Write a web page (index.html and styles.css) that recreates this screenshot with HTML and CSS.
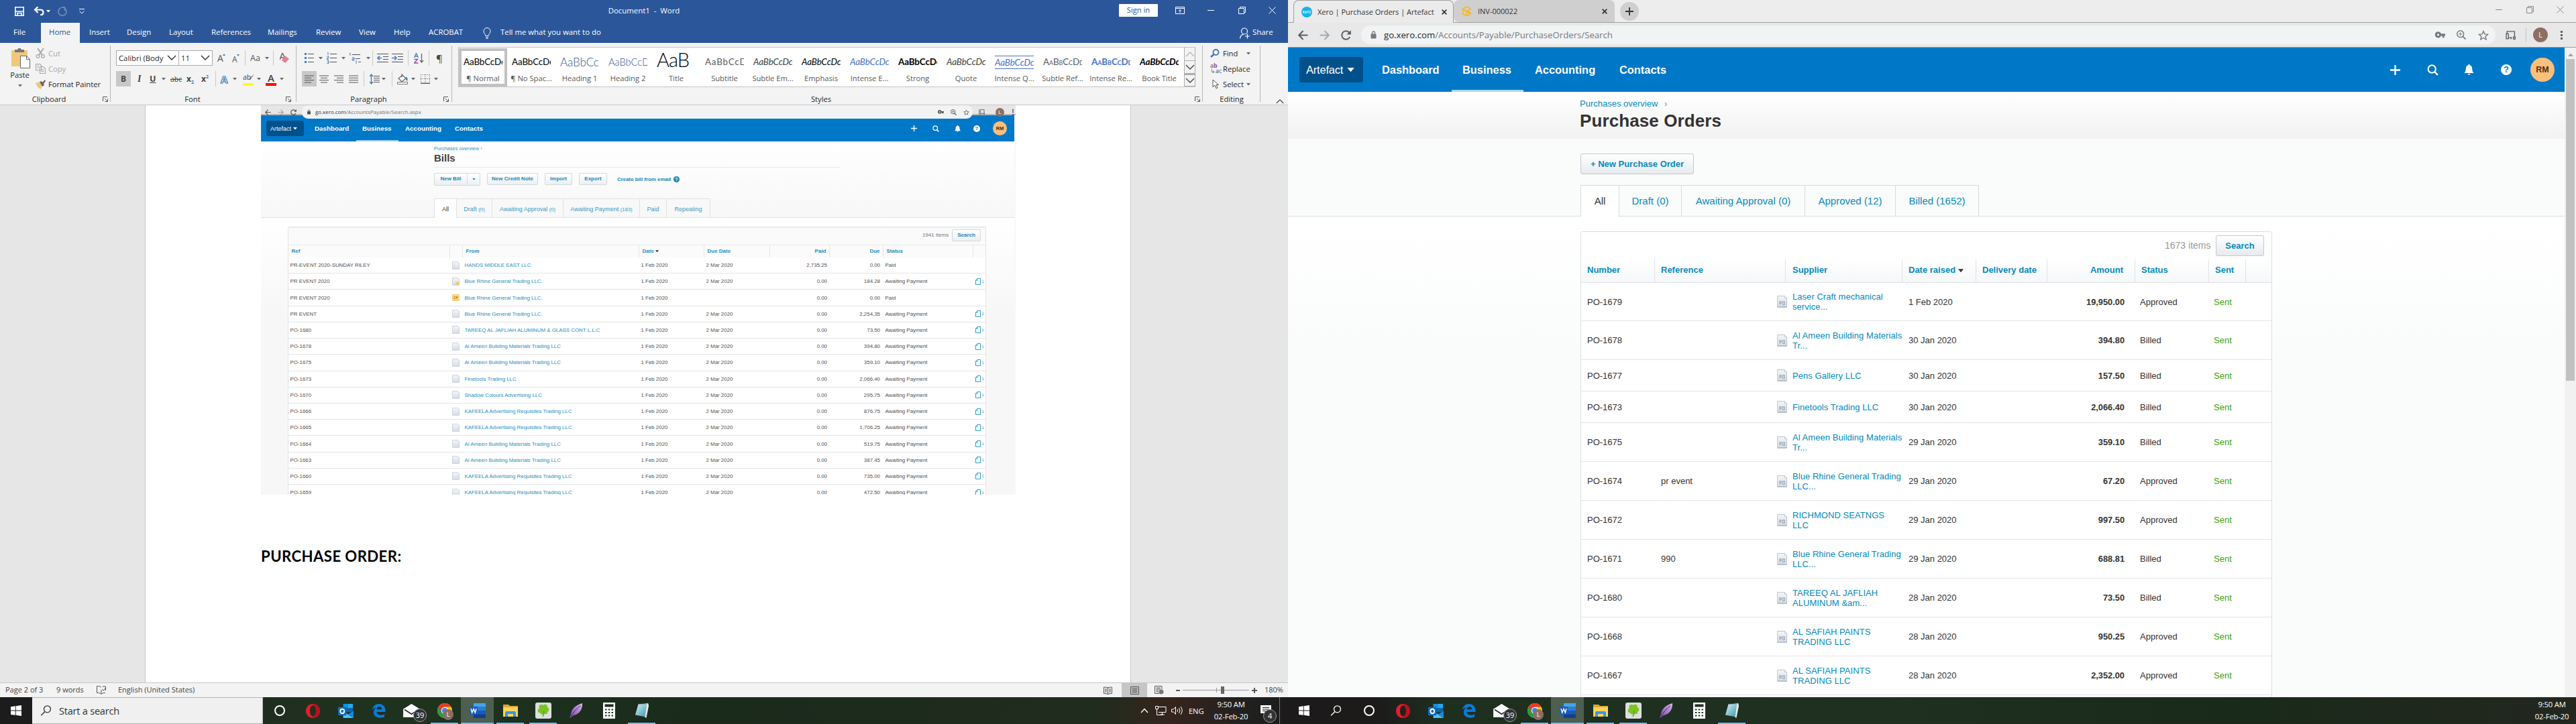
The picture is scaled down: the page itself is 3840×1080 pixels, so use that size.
FILE: index.html
```html
<!DOCTYPE html>
<html lang="en">
<head>
<meta charset="utf-8">
<title>Desktop</title>
<link rel="stylesheet" href="styles.css">
</head>
<body>
<svg class="defs" aria-hidden="true">
  <defs>
    <linearGradient id="gdoc" x1="0" y1="0" x2="0" y2="1"><stop offset="0" stop-color="#f4f6f8"/><stop offset="1" stop-color="#d5dce3"/></linearGradient>
    <linearGradient id="gfeather" x1="1" y1="0" x2="0" y2="1"><stop offset="0" stop-color="#d9b8ea"/><stop offset="1" stop-color="#6f3fa0"/></linearGradient>
    <linearGradient id="gnote" x1="0" y1="0" x2="1" y2="1"><stop offset="0" stop-color="#d5f1f7"/><stop offset="1" stop-color="#3c98ad"/></linearGradient>
  </defs>
  <symbol id="arr" viewBox="0 0 6 4"><path d="M0 0h6L3 3.6z" fill="currentColor"/></symbol>
  <symbol id="chev" viewBox="0 0 14 9"><path d="M1 1l6 6 6-6" fill="none" stroke="currentColor" stroke-width="1.3"/></symbol>
  <symbol id="launch" viewBox="0 0 8 8"><path d="M.5 7V.5H7M3 3l4 4M7.5 3.5v4h-4" fill="none" stroke="#555"/></symbol>
  <symbol id="lines" viewBox="0 0 14 12"><path d="M0 1h14M0 4.300h10M0 7.600h14M0 11h10" stroke="#555" fill="none"/></symbol>
  <symbol id="plus" viewBox="0 0 14 14"><path d="M7 0v14M0 7h14" stroke="currentColor" stroke-width="2.200"/></symbol>
  <symbol id="search" viewBox="0 0 16 16"><circle cx="6.800" cy="6.500" r="5.300" fill="none" stroke="currentColor" stroke-width="2"/><path d="M10.700 10.600L15 15" stroke="currentColor" stroke-width="2.300"/></symbol>
  <symbol id="bell" viewBox="0 0 14 16"><path d="M7 0c.9 0 1.300.6 1.300 1.300C10.800 2 11.600 4 11.700 6.500c.1 3.500.8 4.600 2.300 6.500H0c1.500-1.900 2.200-3 2.300-6.500C2.400 4 3.200 2 5.700 1.300 5.700.6 6.100 0 7 0zM5.200 14h3.600c-.2 1.200-.9 1.800-1.800 1.800S5.400 15.200 5.200 14z" fill="currentColor"/></symbol>
  <symbol id="lock" viewBox="0 0 8 12"><rect y="4.500" width="8" height="7" rx="1" fill="currentColor"/><path d="M2 5V3a2 2 0 014 0v2" fill="none" stroke="currentColor" stroke-width="1.300"/></symbol>
  <symbol id="back" viewBox="0 0 14 14"><path d="M13.500 7H1.500M7 1L1.200 7 7 13" fill="none" stroke="currentColor" stroke-width="1.900"/></symbol>
  <symbol id="reload" viewBox="0 0 14 14"><path d="M12.300 9.500A5.800 5.800 0 117 1.200c2 0 3.500.9 4.700 2.400" fill="none" stroke="currentColor" stroke-width="1.900"/><path d="M13.800 0v6H8z" fill="currentColor"/></symbol>
  <symbol id="key" viewBox="0 0 14 9"><path d="M4.200 0a4.300 4.300 0 014 2.900H14v3h-1.300v2.600h-2.700V5.900H8.200A4.300 4.300 0 114.200 0zm0 2.900a1.500 1.500 0 100 3 1.500 1.500 0 000-3z" fill="currentColor"/></symbol>
  <symbol id="zoomin" viewBox="0 0 14 14"><circle cx="5.700" cy="5.700" r="4.900" fill="none" stroke="currentColor" stroke-width="1.500"/><path d="M9.300 9.300l4.200 4.200" stroke="currentColor" stroke-width="1.800"/><path d="M5.700 3.300v4.800M3.300 5.700h4.800" stroke="currentColor"/></symbol>
  <symbol id="star" viewBox="0 0 16 15"><path d="M8 1.500l1.900 4.400 4.800.4L11 9.400l1.200 4.600L8 11.500 3.800 14 5 9.400 1.300 6.300l4.800-.4z" fill="none" stroke="currentColor" stroke-width="1.400"/></symbol>
  <symbol id="cast" viewBox="0 0 14 12"><path d="M2 4V.7h10.500V8M5 9.500h4M1 4h3v7H1zM11 8.500h2.500v2.800H11zM7.500 9.500v2" fill="none" stroke="currentColor" stroke-width="1.300"/></symbol>
  <symbol id="restore" viewBox="0 0 11 11"><path d="M.5 2.500h8v8h-8zM2.500 2.500v-2h8v8h-2" fill="none" stroke="currentColor"/></symbol>
  <symbol id="close" viewBox="0 0 11 11"><path d="M.5.500l10 10M10.500.500l-10 10" stroke="currentColor" fill="none"/></symbol>
  <symbol id="tabx" viewBox="0 0 8 8"><path d="M.7.700l6.600 6.600M7.300.700L.7 7.300" stroke="currentColor" stroke-width="1.700" fill="none"/></symbol>
  <symbol id="bill" viewBox="0 0 11 12"><path d="M.5.500h7.500l2.500 2v9H.5z" fill="url(#gdoc)" stroke="#c5ccd3" stroke-width=".8"/></symbol>
  <symbol id="billn" viewBox="0 0 11 12"><path d="M.5.500h7.500l2.500 2v9H.5z" fill="url(#gdoc)" stroke="#c5ccd3" stroke-width=".8"/><rect x="5" y="6.500" width="5.500" height="4" rx="1" fill="#f7ca5c"/></symbol>
  <symbol id="billc" viewBox="0 0 11 10"><rect x=".4" y=".4" width="10.200" height="9" rx="1" fill="#fadd7c" stroke="#eebb47" stroke-width=".8"/><path d="M5 3.500H3v3h2M6 6.500v-3h2v1.500H6l2 1.500" fill="none" stroke="#a9791a" stroke-width=".8"/></symbol>
  <symbol id="clip" viewBox="0 0 8 10"><path d="M3 .5h4.500v9h-7V3zM.5 3.200H3V.5" fill="none" stroke="#2b9fc9"/></symbol>
  <symbol id="po" viewBox="0 0 15 18"><path d="M.6.500h10.900l3 3v13.800H.6z" fill="url(#gdoc)" stroke="#bdc6d0"/><path d="M11.500.500v3h3" fill="#fff" stroke="#bdc6d0"/><path d="M4 13.500V9h2.200v2.500H4M8.500 9h2.800v4.400H8.500z" fill="none" stroke="#a3afbd" stroke-width="1.300"/><path d="M1 16.900h13.500" stroke="#a9b4c0" stroke-width="1.200"/></symbol>
  <symbol id="win" viewBox="0 0 16 16"><path d="M0 2.200L6.800 1.300v6.300H0zM7.700 1.200L16 0v7.600H7.700zM0 8.500h6.800v6.300L0 13.900zM7.700 8.500H16V16l-8.300-1.200z" fill="#fff"/></symbol>
  <symbol id="glass" viewBox="0 0 16 16"><circle cx="10" cy="5.800" r="5" fill="none" stroke="currentColor" stroke-width="1.300"/><path d="M6.500 9.500L.7 15.300" stroke="currentColor" stroke-width="1.400"/></symbol>
  <symbol id="opera" viewBox="0 0 24 24"><path fill-rule="evenodd" d="M12 1c6.300 0 11 4.800 11 11s-4.700 11-11 11S1 18.200 1 12 5.700 1 12 1zm0 2.700c-2.900 0-4.700 3.700-4.700 8.300s1.800 8.300 4.700 8.300 4.700-3.700 4.700-8.300S14.900 3.700 12 3.700z" fill="#e81c27"/><path d="M16.700 12c0 4.600-1.800 8.300-4.700 8.300V23c6.300 0 11-4.800 11-11S18.300 1 12 1v2.700c2.900 0 4.700 3.700 4.700 8.300z" fill="#bd0f1c"/></symbol>
  <symbol id="outlook" viewBox="0 0 24 24"><rect x="8" y="1" width="15" height="13" fill="#0a64ad"/><path d="M8 1h7.500v6.500H8z" fill="#1490df"/><path d="M15.500 1H23v6.500h-7.500z" fill="#28a8ea"/><path d="M8 13l8 4 8-5v11H8z" fill="#1a87d7"/><path d="M8 13l15 10H8z" fill="#50c4f2"/><rect y="6" width="13" height="13" rx="1" fill="#0f6cbd"/><ellipse cx="6.500" cy="12.500" rx="3" ry="3.400" fill="none" stroke="#fff" stroke-width="1.900"/></symbol>
  <symbol id="edge" viewBox="0 0 22 22"><path d="M1 9.700C2 4 6 .5 11.300.5 17.700.5 21.500 5 21.500 11v2.200H7.700c.2 3.300 3 4.900 6.300 4.900 2.200 0 4.200-.6 6-1.700v4.300c-1.900 1-4.400 1.600-7.100 1.600C7 22.300 3 18.700 3 13.700c0-3.200 1.600-5.800 4.300-7.300C4.600 6.600 2.500 7.700 1 9.700zm6.900-.6h7.900c0-2.600-1.400-4.100-3.800-4.100C9.800 5 8.300 6.600 7.900 9.100z" fill="#0b7ad9"/></symbol>
  <symbol id="mail" viewBox="0 0 26 22"><path d="M0 8L13 0l13 8v13H0z" fill="#fff"/><path d="M2 9l11 7 11-7" fill="none" stroke="#1f2e20" stroke-width="1.800"/></symbol>
  <symbol id="chrome" viewBox="0 0 22 22"><circle cx="11" cy="11" r="11" fill="#fbc116"/><path d="M11 11L1.500 5.500A11 11 0 0011 22l3-6z" fill="#279a48"/><path d="M11 5.500h9.500a11 11 0 00-19 0L6 13z" fill="#e33b2e"/><circle cx="11" cy="11" r="5.200" fill="#fff"/><circle cx="11" cy="11" r="4.100" fill="#4285f4"/></symbol>
  <symbol id="word" viewBox="0 0 24 22"><path d="M6 0h18v5.500H6z" fill="#41a5ee"/><path d="M6 5.500h18V11H6z" fill="#2b7cd3"/><path d="M6 11h18v5.500H6z" fill="#185abd"/><path d="M6 16.500h18V22H6z" fill="#103f91"/><rect y="5" width="12" height="12" rx="1" fill="#185abd"/><path d="M2 8l1.700 6L6 8.500 8.300 14 10 8" fill="none" stroke="#fff" stroke-width="1.500"/></symbol>
  <symbol id="folder" viewBox="0 0 22 20"><path d="M0 1h8l2 2h12v5H0z" fill="#e0a82e"/><path d="M0 5h22v14H0z" fill="#fcd462"/><path d="M3 19v-6q0-2 2-2h12q2 0 2 2v6h-4v-4H7v4z" fill="#3a96dd"/></symbol>
  <symbol id="clover" viewBox="0 0 24 24"><rect width="24" height="24" rx="3" fill="#dcdfdf"/><g fill="#7cc41f"><circle cx="9" cy="6.500" r="3.500"/><circle cx="14.500" cy="6" r="3.300"/><circle cx="7" cy="12" r="3.300"/><circle cx="17" cy="10.500" r="3.300"/><circle cx="10" cy="15" r="2.700"/><circle cx="15.500" cy="14.500" r="2.700"/><circle cx="12" cy="10.500" r="3"/></g><path d="M12.500 12q1 5-1.500 9" stroke="#5ca016" stroke-width="1.500" fill="none"/></symbol>
  <symbol id="feather" viewBox="0 0 20 24"><path d="M20 0c.5 9-4 17-14 19L1 23.500 0 22l2-4C3 9 9 3 20 0z" fill="url(#gfeather)"/><path d="M1 23C5 15 10 9 17 4" stroke="#4b2375" fill="none"/></symbol>
  <symbol id="calc" viewBox="0 0 18 24"><path fill-rule="evenodd" d="M0 0h18v24H0zM2.500 2.500v4h13v-4zM3 9.500v2h2.500v-2zm4.700 0v2h2.600v-2zm4.800 0v2H15v-2zM3 14v2h2.500v-2zm4.700 0v2h2.600v-2zm4.800 0v2H15v-2zM3 18.500v2h2.500v-2zm4.700 0v2h2.600v-2zm4.800 0v2H15v-2z" fill="#fff"/></symbol>
  <symbol id="note" viewBox="0 0 22 24"><path d="M5 2L21 0l1 4-4 20-2-1z" fill="#e6eceb"/><path d="M5 1.500l14-.5-3 21L0 19z" fill="url(#gnote)"/><path d="M5 1.500l14-.5" stroke="#667" stroke-dasharray="1 1"/></symbol>
</svg>

<main class="screens">
<section class="screen">
  <div class="word">
    <header class="titlebar">
      <div class="quick">
        <svg width="14" height="14" viewBox="0 0 14 14"><path d="M.8.800h12.400v12.400H.8zM.8 7h12.400M4 13V9.500h6V13" fill="none" stroke="#fff" stroke-width="1.600"/></svg>
        <svg width="15" height="13" viewBox="0 0 15 13"><path d="M5.500 0L1 4.500 5.500 9M1.500 4.500H9q4.500 0 4.500 4T9 12.300" fill="none" stroke="#fff" stroke-width="2.200"/></svg>
        <svg class="a" width="6" height="4"><use href="#arr"/></svg>
        <svg class="dim" width="14" height="14" viewBox="0 0 14 14"><path d="M5 1.500A6 6 0 1010 2M10.500 6V1h-5" fill="none" stroke="#fff" stroke-width="1.800"/></svg>
        <svg width="8" height="8" viewBox="0 0 8 8"><path d="M0 .5h8" stroke="#fff"/><path d="M.5 3.500L4 7l3.500-3.500" fill="none" stroke="#fff"/></svg>
      </div>
      <div class="doctitle">Document1&nbsp; -&nbsp; Word</div>
      <div class="wincontrols">
        <span class="signin">Sign in</span>
        <svg width="14" height="11" viewBox="0 0 14 11"><path d="M.5.500h13v10H.5zM.5 2.500h13M7 9V4.500M5 6.500l2-2 2 2" fill="none" stroke="#fff"/></svg>
        <svg width="10" height="11" viewBox="0 0 10 11"><path d="M0 5.500h10" stroke="#fff"/></svg>
        <svg width="11" height="11"><use href="#restore"/></svg>
        <svg width="11" height="11"><use href="#close"/></svg>
      </div>
    </header>
    <nav class="rtabs">
      <span>File</span><span class="on">Home</span><span>Insert</span><span>Design</span><span>Layout</span><span>References</span><span>Mailings</span><span>Review</span><span>View</span><span>Help</span><span>ACROBAT</span>
      <svg width="12" height="17" viewBox="0 0 12 17"><path d="M4 12.500c0-2.500-3-3.500-3-7a5 5 0 0110 0c0 3.500-3 4.500-3 7zM4 14.500h4M4.500 16.500h3" fill="none" stroke="#fff"/></svg>
      <span>Tell me what you want to do</span>
      <svg width="15" height="17" viewBox="0 0 15 17"><circle cx="7" cy="5.500" r="4.500" fill="none" stroke="#fff" stroke-width="1.200"/><path d="M.6 16.500c0-3.500 2-5.500 5-6.300M11.500 9.500v7M8 13h7" fill="none" stroke="#fff" stroke-width="1.200"/></svg>
      <span>Share</span>
    </nav>
    <div class="ribbon">
      <div class="grp g-clip">
        <div class="clipbody">
          <div class="paste">
            <svg width="29" height="30" viewBox="0 0 29 30"><path d="M0 3h24v24H0z" fill="#f0c77c"/><path d="M5 6V2h4.500a2.500 2.500 0 015 0H19v4z" fill="#777"/><path d="M13.500 11.500h9l5 5v13h-14z" fill="#fff" stroke="#666"/><path d="M22.500 11.500v5h5" fill="none" stroke="#666"/></svg>
            <span>Paste</span>
            <svg class="a" width="6" height="4"><use href="#arr"/></svg>
          </div>
          <div class="cmds">
            <svg width="15" height="15" viewBox="0 0 15 15"><path d="M3 0l7 10M12 0L5 10" stroke="#a8a8a8" stroke-width="2"/><circle cx="3.500" cy="12" r="2.300" fill="none" stroke="#a8a8a8" stroke-width="1.300"/><circle cx="11" cy="12" r="2.300" fill="none" stroke="#a8a8a8" stroke-width="1.300"/></svg><span class="off">Cut</span>
            <svg width="15" height="15" viewBox="0 0 15 15"><path d="M.6.600h6l2 2V10H.6zM6.500 4.500h5l3 3v7h-8z" fill="#f3f3f3" stroke="#a8a8a8" stroke-width="1.100"/><path d="M8.500 9h4M8.500 11.500h4M2.500 3.500H5M2.500 6H5" stroke="#a8a8a8"/></svg><span class="off">Copy</span>
            <svg width="15" height="14" viewBox="0 0 15 14"><path d="M0 5l6-2 4 6-2 5q-5-1-8-9z" fill="#f0c77c"/><path d="M6 3l3-1 1 2 4-4 1 2-3 4 1 2-3 2z" fill="#666"/></svg><span>Format Painter</span>
          </div>
        </div>
        <footer><span>Clipboard</span><svg width="8" height="8"><use href="#launch"/></svg></footer>
      </div>
      <div class="grp g-font">
        <div class="row f1">
          <span class="combo">Calibri (Body<svg width="14" height="9"><use href="#chev"/></svg></span>
          <span class="combo">11<svg width="14" height="9"><use href="#chev"/></svg></span>
          <span class="big">A<i class="up"></i></span>
          <span class="mid">A<i class="dn"></i></span>
          <b class="sep"></b><span class="aa">Aa</span><svg class="a" width="6" height="4"><use href="#arr"/></svg><b class="sep"></b>
          <svg width="15" height="16" viewBox="0 0 15 16"><path d="M0 10L4 0l4 8M1.500 7H7" fill="none" stroke="#666" stroke-width="1.500"/><path d="M8 4l6 5-6 6-5-4z" fill="#e8808c"/></svg>
        </div>
        <div class="row f2">
          <span class="boxed"><b>B</b></span><i class="it">I</i><u class="un">U</u><svg class="a" width="6" height="4"><use href="#arr"/></svg>
          <s class="abc">abc</s><span class="sx">x<sub>2</sub></span><span class="sx">x<sup>2</sup></span><b class="sep"></b>
          <span class="glow">A</span><svg class="a" width="6" height="4"><use href="#arr"/></svg>
          <span class="hl">ab<svg width="9" height="10" viewBox="0 0 9 10"><path d="M9 0L3 9H0z" fill="#666"/></svg></span><svg class="a" width="6" height="4"><use href="#arr"/></svg>
          <span class="fc">A</span><svg class="a" width="6" height="4"><use href="#arr"/></svg>
        </div>
        <footer><span>Font</span><svg width="8" height="8"><use href="#launch"/></svg></footer>
      </div>
      <div class="grp g-para">
        <div class="row p1">
          <svg width="14" height="15" viewBox="0 0 14 15"><path d="M5 1.500h9M5 7.500h9M5 13.500h9" stroke="#555"/><path d="M0 0h3v3H0zM0 6h3v3H0zM0 12h3v3H0z" fill="#4a7ebb"/></svg><svg class="a" width="6" height="4"><use href="#arr"/></svg>
          <svg width="15" height="17" viewBox="0 0 15 17"><path d="M5 2.500h10M5 8.500h10M5 14.500h10" stroke="#555"/><path d="M1 1l1-1v4.500M.5 6.500H3v2H.5v2H3M.5 12.500H3v4H.5M1 14.500h2" fill="none" stroke="#4a7ebb"/></svg><svg class="a" width="6" height="4"><use href="#arr"/></svg>
          <svg width="17" height="16" viewBox="0 0 17 16"><path d="M4 2.500h12M9 8.500h7M13 13.500h4" stroke="#555"/><path d="M0 1l1-1v4M4 7h3v4H4V9h3M10 11v5" fill="none" stroke="#4a7ebb"/></svg><svg class="a" width="6" height="4"><use href="#arr"/></svg>
          <b class="sep"></b>
          <svg width="17" height="14" viewBox="0 0 17 14"><path d="M0 .5h17M9 4.500h8M9 8.500h8M0 12.500h17" stroke="#555"/><path d="M7 6.500H1M4 3.500l-3 3 3 3" fill="none" stroke="#4a7ebb" stroke-width="1.600"/></svg>
          <svg width="17" height="14" viewBox="0 0 17 14"><path d="M0 .5h17M9 4.500h8M9 8.500h8M0 12.500h17" stroke="#555"/><path d="M0 6.500h6M4 3.500l3 3-3 3" fill="none" stroke="#4a7ebb" stroke-width="1.600"/></svg>
          <b class="sep"></b>
          <svg width="15" height="16" viewBox="0 0 15 16"><path d="M.5 7L3.500.500l3 6.500M1.500 5h4" fill="none" stroke="#4a7ebb" stroke-width="1.300"/><path d="M.5 9.500h5l-5 5.500h6" fill="none" stroke="#8a4fb0" stroke-width="1.300"/><path d="M11.500 1v12M9 11l2.500 3 2.500-3" fill="none" stroke="#666" stroke-width="1.300"/></svg>
          <b class="sep"></b><span class="pil">¶</span>
        </div>
        <div class="row p2">
          <span class="boxed"><svg width="14" height="12"><use href="#lines"/></svg></span>
          <svg width="14" height="12" viewBox="0 0 14 12"><path d="M0 1h14M2 4.300h10M0 7.600h14M2 11h10" stroke="#555"/></svg>
          <svg width="14" height="12" viewBox="0 0 14 12"><path d="M0 1h14M4 4.300h10M0 7.600h14M4 11h10" stroke="#555"/></svg>
          <svg width="14" height="12" viewBox="0 0 14 12"><path d="M0 1h14M0 4.300h14M0 7.600h14M0 11h14" stroke="#555"/></svg>
          <b class="sep"></b>
          <svg width="15" height="16" viewBox="0 0 15 16"><path d="M6 3.500h9M6 6.500h9M6 9.500h9M6 12.500h9" stroke="#555"/><path d="M2.500 1v14M0 4l2.500-3L5 4M0 12l2.500 3L5 12" fill="none" stroke="#4a7ebb" stroke-width="1.400"/></svg><svg class="a" width="6" height="4"><use href="#arr"/></svg>
          <b class="sep"></b>
          <svg width="17" height="16" viewBox="0 0 17 16"><path d="M2 7l6-5 5 5-6 5zM7 0v5" fill="none" stroke="#666" stroke-width="1.200"/><path d="M13 4q4 3 2 7l-2-2z" fill="#4a7ebb"/><path d="M.5 12.500h15v3H.5z" fill="#fff" stroke="#777"/></svg><svg class="a" width="6" height="4"><use href="#arr"/></svg>
          <svg width="14" height="14" viewBox="0 0 14 14"><path d="M.5 0v13M13.500 0v13M7 0v13M0 .5h14M0 6.500h14" stroke="#666" stroke-dasharray="1 1.500"/><path d="M0 13.300h14" stroke="#555" stroke-width="1.400"/></svg><svg class="a" width="6" height="4"><use href="#arr"/></svg>
        </div>
        <footer><span>Paragraph</span><svg width="8" height="8"><use href="#launch"/></svg></footer>
      </div>
      <div class="grp g-styles">
        <div class="gallery">
          <div class="st sel"><em>AaBbCcDc</em><small>¶ Normal</small></div>
          <div class="st"><em>AaBbCcDc</em><small>¶ No Spac...</small></div>
          <div class="st h1"><em>AaBbCc</em><small>Heading 1</small></div>
          <div class="st h2"><em>AaBbCcD</em><small>Heading 2</small></div>
          <div class="st ti"><em>AaB</em><small>Title</small></div>
          <div class="st su"><em>AaBbCcD</em><small>Subtitle</small></div>
          <div class="st se"><em>AaBbCcDc</em><small>Subtle Em...</small></div>
          <div class="st emph"><em>AaBbCcDc</em><small>Emphasis</small></div>
          <div class="st ie"><em>AaBbCcDc</em><small>Intense E...</small></div>
          <div class="st bo"><em>AaBbCcDc</em><small>Strong</small></div>
          <div class="st se"><em>AaBbCcDc</em><small>Quote</small></div>
          <div class="st iq"><em>AaBbCcDc</em><small>Intense Q...</small></div>
          <div class="st sc"><em>AaBbCcDd</em><small>Subtle Ref...</small></div>
          <div class="st sc blue"><em>AaBbCcDd</em><small>Intense Re...</small></div>
          <div class="st bt"><em>AaBbCcDc</em><small>Book Title</small></div>
          <div class="gscroll"><span class="flip"><svg width="14" height="9"><use href="#chev"/></svg></span><span><svg width="14" height="9"><use href="#chev"/></svg></span><span class="more"><svg width="14" height="9"><use href="#chev"/></svg></span></div>
        </div>
        <footer><span>Styles</span><svg width="8" height="8"><use href="#launch"/></svg></footer>
      </div>
      <div class="grp g-edit">
        <div class="cmds">
          <svg width="14" height="13" viewBox="0 0 14 13"><circle cx="8.500" cy="5" r="4" fill="none" stroke="#3f76b5" stroke-width="1.800"/><path d="M5.500 8L1 12" stroke="#3f76b5" stroke-width="2.600"/></svg><span>Find</span><svg class="a" width="6" height="4"><use href="#arr"/></svg>
          <span class="abac">a<b>b</b><br><i>↳</i>a<i>c</i></span><span>Replace</span><i></i>
          <svg width="14" height="15" viewBox="0 0 14 15"><path d="M4 1v11l3-3 2 5 2-1-2-4.500h3.500z" fill="#fff" stroke="#555"/></svg><span>Select</span><svg class="a" width="6" height="4"><use href="#arr"/></svg>
        </div>
        <footer><span>Editing</span></footer>
      </div>
      <div class="collapse"><svg width="12" height="8"><use href="#chev"/></svg></div>
    </div>

    <div class="canvas">
      <article class="page">
        <div class="pic">
          <div class="p-url">
            <svg width="9" height="9"><use href="#back"/></svg><svg class="fw" width="9" height="9"><use href="#back"/></svg><svg width="9" height="9"><use href="#reload"/></svg>
            <div class="p-omni"><svg width="5" height="8"><use href="#lock"/></svg><span><b>go.xero.com</b>/AccountsPayable/Search.aspx</span><svg width="9" height="6"><use href="#key"/></svg><svg width="9" height="9"><use href="#zoomin"/></svg><svg width="9" height="9"><use href="#star"/></svg></div>
            <svg class="p-cast" width="9" height="8"><use href="#cast"/></svg><span class="p-av">L</span><i class="p-dots"></i>
          </div>
          <nav class="p-nav">
            <span class="org">Artefact <svg width="6" height="4"><use href="#arr"/></svg></span>
            <b>Dashboard</b><b class="on">Business</b><b>Accounting</b><b>Contacts</b>
            <svg width="9" height="9"><use href="#plus"/></svg><svg width="10" height="10"><use href="#search"/></svg><svg width="9" height="10"><use href="#bell"/></svg><span class="q">?</span><span class="rm">RM</span>
          </nav>
          <div class="p-head">
            <div class="p-crumb">Purchases overview <i>›</i></div>
            <h2>Bills</h2>
            <div class="p-btns"><span class="split"><b>New Bill</b><i><svg width="5" height="3"><use href="#arr"/></svg></i></span><span>New Credit Note</span><span>Import</span><span>Export</span><a>Create bill from email</a><em>?</em></div>
            <div class="p-tabs"><span class="on">All</span><span>Draft <small>(0)</small></span><span>Awaiting Approval <small>(0)</small></span><span>Awaiting Payment <small>(183)</small></span><span>Paid</span><span>Repeating</span></div>
          </div>
          <div class="p-body">
            <div class="bills">
              <div class="b-tools"><span>1941 items</span><b>Search</b></div>
              <div class="b-head"><b>Ref</b><b></b><b>From</b><b>Date <svg width="5" height="4"><use href="#arr"/></svg></b><b>Due Date</b><b class="r">Paid</b><b class="r">Due</b><b>Status</b><b></b></div>
              <div class="b-row"><span>PR-EVENT 2020-SUNDAY RILEY</span><svg width="11" height="12"><use href="#bill"/></svg><a>HANDS MIDDLE EAST LLC</a><span>1 Feb 2020</span><span>2 Mar 2020</span><span>2,735.25</span><span>0.00</span><span>Paid</span></div>
              <div class="b-row"><span>PR EVENT 2020</span><svg width="11" height="12"><use href="#billn"/></svg><a>Blue Rhine General Trading LLC.</a><span>1 Feb 2020</span><span>2 Mar 2020</span><span>0.00</span><span>184.28</span><span>Awaiting Payment</span><i><svg width="8" height="10"><use href="#clip"/></svg>1</i></div>
              <div class="b-row"><span>PR EVENT 2020</span><svg width="11" height="10"><use href="#billc"/></svg><a>Blue Rhine General Trading LLC.</a><span>1 Feb 2020</span><span></span><span>0.00</span><span>0.00</span><span>Paid</span></div>
              <div class="b-row"><span>PR EVENT</span><svg width="11" height="12"><use href="#bill"/></svg><a>Blue Rhine General Trading LLC.</a><span>1 Feb 2020</span><span>2 Mar 2020</span><span>0.00</span><span>2,254.35</span><span>Awaiting Payment</span><i><svg width="8" height="10"><use href="#clip"/></svg>2</i></div>
              <div class="b-row"><span>PO-1680</span><svg width="11" height="12"><use href="#bill"/></svg><a>TAREEQ AL JAFLIAH ALUMINUM &amp; GLASS CONT L.L.C</a><span>1 Feb 2020</span><span>2 Mar 2020</span><span>0.00</span><span>73.50</span><span>Awaiting Payment</span><i><svg width="8" height="10"><use href="#clip"/></svg>1</i></div>
              <div class="b-row"><span>PO-1678</span><svg width="11" height="12"><use href="#bill"/></svg><a>Al Ameen Building Materials Trading LLC</a><span>1 Feb 2020</span><span>2 Mar 2020</span><span>0.00</span><span>394.80</span><span>Awaiting Payment</span><i><svg width="8" height="10"><use href="#clip"/></svg>1</i></div>
              <div class="b-row"><span>PO-1675</span><svg width="11" height="12"><use href="#bill"/></svg><a>Al Ameen Building Materials Trading LLC</a><span>1 Feb 2020</span><span>2 Mar 2020</span><span>0.00</span><span>359.10</span><span>Awaiting Payment</span><i><svg width="8" height="10"><use href="#clip"/></svg>1</i></div>
              <div class="b-row"><span>PO-1673</span><svg width="11" height="12"><use href="#bill"/></svg><a>Finetools Trading LLC</a><span>1 Feb 2020</span><span>2 Mar 2020</span><span>0.00</span><span>2,066.40</span><span>Awaiting Payment</span><i><svg width="8" height="10"><use href="#clip"/></svg>1</i></div>
              <div class="b-row"><span>PO-1670</span><svg width="11" height="12"><use href="#bill"/></svg><a>Shadow Colours Advertising LLC</a><span>1 Feb 2020</span><span>2 Mar 2020</span><span>0.00</span><span>295.75</span><span>Awaiting Payment</span><i><svg width="8" height="10"><use href="#clip"/></svg>1</i></div>
              <div class="b-row"><span>PO-1666</span><svg width="11" height="12"><use href="#bill"/></svg><a>KAFEELA Advertising Requisites Trading LLC</a><span>1 Feb 2020</span><span>2 Mar 2020</span><span>0.00</span><span>876.75</span><span>Awaiting Payment</span><i><svg width="8" height="10"><use href="#clip"/></svg>1</i></div>
              <div class="b-row"><span>PO-1665</span><svg width="11" height="12"><use href="#bill"/></svg><a>KAFEELA Advertising Requisites Trading LLC</a><span>1 Feb 2020</span><span>2 Mar 2020</span><span>0.00</span><span>1,706.25</span><span>Awaiting Payment</span><i><svg width="8" height="10"><use href="#clip"/></svg>1</i></div>
              <div class="b-row"><span>PO-1664</span><svg width="11" height="12"><use href="#bill"/></svg><a>Al Ameen Building Materials Trading LLC</a><span>1 Feb 2020</span><span>2 Mar 2020</span><span>0.00</span><span>519.75</span><span>Awaiting Payment</span><i><svg width="8" height="10"><use href="#clip"/></svg>1</i></div>
              <div class="b-row"><span>PO-1663</span><svg width="11" height="12"><use href="#bill"/></svg><a>Al Ameen Building Materials Trading LLC</a><span>1 Feb 2020</span><span>2 Mar 2020</span><span>0.00</span><span>387.45</span><span>Awaiting Payment</span><i><svg width="8" height="10"><use href="#clip"/></svg>1</i></div>
              <div class="b-row"><span>PO-1660</span><svg width="11" height="12"><use href="#bill"/></svg><a>KAFEELA Advertising Requisites Trading LLC</a><span>1 Feb 2020</span><span>2 Mar 2020</span><span>0.00</span><span>735.00</span><span>Awaiting Payment</span><i><svg width="8" height="10"><use href="#clip"/></svg>1</i></div>
              <div class="b-row"><span>PO-1659</span><svg width="11" height="12"><use href="#bill"/></svg><a>KAFEELA Advertising Requisites Trading LLC</a><span>1 Feb 2020</span><span>2 Mar 2020</span><span>0.00</span><span>472.50</span><span>Awaiting Payment</span><i><svg width="8" height="10"><use href="#clip"/></svg>1</i></div>
            </div>
          </div>
        </div>
        <h1>PURCHASE ORDER:</h1>
      </article>
    </div>

    <footer class="status">
      <span>Page 2 of 3</span><span>9 words</span>
      <svg width="14" height="13" viewBox="0 0 14 13"><path d="M7 2.500C5.500.500 3 .5.500.500v10c2.500 0 5 0 6.500 2V6M9 1h4.500v6M7 12.500c1-1.500 3-2 6-2M8.500 5l2 2.500L13.500 3" fill="none" stroke="#555"/></svg>
      <span class="lang">English (United States)</span>
      <svg width="13" height="12" viewBox="0 0 13 12"><path d="M6.500 1v11M.5 1q4 0 6 1 2-1 6-1v9.500q-4 0-6 1-2-1-6-1zM2 4h3M2 6h3M2 8h3M8 4h3M8 6h3M8 8h3" fill="none" stroke="#555"/></svg>
      <span class="on"><svg width="13" height="12" viewBox="0 0 13 12"><path d="M.5.500h12v11H.5zM2.500 3h8M2.500 5h8M2.500 7h8M2.500 9h8" fill="none" stroke="#555"/></svg></span>
      <svg width="14" height="13" viewBox="0 0 14 13"><path d="M11 5V.5H.5v11H7M2.500 3H9M2.500 5H9M2.500 7H6M2.500 9H6" fill="none" stroke="#555"/><circle cx="10" cy="9" r="3.500" fill="#777"/></svg>
      <b class="mn"></b><span class="slider"><i></i></span>
      <svg width="8" height="8" viewBox="0 0 8 8"><path d="M4 0v8M0 4h8" stroke="#555" stroke-width="2"/></svg>
      <span>180%</span>
    </footer>
  </div>
  <footer class="taskbar left">
    <span class="start"><svg width="16" height="16"><use href="#win"/></svg></span>
    <span class="sbox"><svg width="17" height="16"><use href="#glass"/></svg>Start a search</span>
    <span class="t ring"><i></i></span>
    <span class="t"><svg width="23" height="23"><use href="#opera"/></svg></span>
    <span class="t"><svg width="25" height="23"><use href="#outlook"/></svg></span>
    <span class="t"><svg width="21" height="22"><use href="#edge"/></svg></span>
    <span class="t"><svg width="25" height="21"><use href="#mail"/></svg><em class="num">39</em></span>
    <span class="t run"><svg width="22" height="22"><use href="#chrome"/></svg><em>L</em></span>
    <span class="t run act"><svg width="24" height="22"><use href="#word"/></svg></span>
    <span class="t run"><svg width="22" height="20"><use href="#folder"/></svg></span>
    <span class="t run"><svg width="24" height="24"><use href="#clover"/></svg></span>
    <span class="t"><svg width="21" height="23"><use href="#feather"/></svg></span>
    <span class="t"><svg width="18" height="24"><use href="#calc"/></svg></span>
    <span class="t run"><svg width="22" height="22"><use href="#note"/></svg></span>
    <div class="tray">
      <svg width="12" height="8" viewBox="0 0 12 8"><path d="M1 7l5-5.500L11 7" fill="none" stroke="#fff" stroke-width="1.400"/></svg>
      <svg width="17" height="14" viewBox="0 0 17 14"><path d="M4 1.500h12v8H5M.5.500h4v4h-4zM2.500 4.500v9h9M10.500 9.500v4M7 13h7" fill="none" stroke="#fff"/></svg>
      <svg width="17" height="14" viewBox="0 0 17 14"><path d="M.5 5h3l3-3.500v11L3.500 9h-3zM9 5q1.500 2 0 4M11.500 3q3 4 0 8M14 1q4.500 6 0 12" fill="none" stroke="#fff"/></svg>
      <span>ENG</span>
      <time>9:50 AM<br>02-Feb-20</time>
      <span class="ac"><svg width="17" height="16" viewBox="0 0 17 16"><path d="M0 0h16v12H9l-4 4v-4H0z" fill="#fff"/><path d="M3 3.500h10M3 6h10M3 8.500h7" stroke="#222"/></svg><em class="num">4</em></span>
      <b></b>
    </div>
  </footer>
</section>

<section class="screen">
  <div class="chrome">
    <header class="strip">
      <div class="tab on"><svg width="16" height="16" viewBox="0 0 16 16"><circle cx="8" cy="8" r="8" fill="#13b5ea"/><path d="M2 6l2.500 4M4.500 6L2 10M5.500 8h2.300a1.200 1.500 0 10-.5 1.700M9 10V6.500l1.500-.5M12.300 6.200a1.300 1.700 0 100 3.600 1.300 1.700 0 000-3.600" fill="none" stroke="#fff" stroke-width=".8"/></svg><span>Xero | Purchase Orders | Artefact</span><svg width="8" height="8"><use href="#tabx"/></svg></div>
      <div class="tab"><svg width="16" height="16" viewBox="0 0 16 16"><path d="M13.500 4.500L7.500 1.200 1.500 4.500v7l6 3.500 6-3.500-6-3.500 6-3.500M1.500 4.500l6 3.500v7M9 8l5 3" fill="none" stroke="#f5b81c" stroke-width="1.500"/></svg><span>INV-000022</span><svg width="8" height="8"><use href="#tabx"/></svg></div>
      <span class="newtab"><svg width="12" height="12"><use href="#plus"/></svg></span>
      <div class="ctl"><svg width="10" height="11" viewBox="0 0 10 11"><path d="M0 5.500h10" stroke="currentColor"/></svg><svg width="11" height="11"><use href="#restore"/></svg><svg width="11" height="11"><use href="#close"/></svg></div>
    </header>
    <div class="bar">
      <svg width="15" height="15"><use href="#back"/></svg><svg class="fw" width="15" height="15"><use href="#back"/></svg><svg width="15" height="15"><use href="#reload"/></svg>
      <div class="omni"><svg width="9" height="12"><use href="#lock"/></svg><span><b>go.xero.com</b>/Accounts/Payable/PurchaseOrders/Search</span><svg width="15" height="10"><use href="#key"/></svg><svg width="14" height="14"><use href="#zoomin"/></svg><svg width="16" height="15"><use href="#star"/></svg></div>
      <svg class="cast" width="15" height="13"><use href="#cast"/></svg><i class="vsep"></i><span class="av">L</span><i class="dots"></i>
    </div>
    <div class="view">
      <div class="web">
        <nav class="nav">
          <span class="org">Artefact <svg width="11" height="7"><use href="#arr"/></svg></span>
          <b>Dashboard</b><b class="on">Business</b><b>Accounting</b><b>Contacts</b>
          <svg width="15" height="15"><use href="#plus"/></svg><svg width="17" height="17"><use href="#search"/></svg><svg width="15" height="16"><use href="#bell"/></svg><span class="q">?</span><span class="rm">RM</span>
        </nav>
        <div class="head"><div class="crumb">Purchases overview <i>›</i></div><h2>Purchase Orders</h2></div>
        <div class="actions">
          <span class="btn">+ New Purchase Order</span>
          <div class="tabs"><span class="on">All</span><span>Draft (0)</span><span>Awaiting Approval (0)</span><span>Approved (12)</span><span>Billed (1652)</span></div>
        </div>
        <div class="content">
          <div class="orders">
            <div class="o-tools"><span>1673 items</span><b class="btn">Search</b></div>
            <div class="o-head"><b>Number</b><b>Reference</b><b>Supplier</b><b>Date raised <svg width="8" height="6"><use href="#arr"/></svg></b><b>Delivery date</b><b class="r">Amount</b><b>Status</b><b>Sent</b><b></b></div>
            <div class="o-row first"><span>PO-1679</span><span></span><svg width="15" height="18"><use href="#po"/></svg><a>Laser Craft mechanical<br>service...</a><span>1 Feb 2020</span><b>19,950.00</b><span>Approved</span><em>Sent</em></div>
            <div class="o-row"><span>PO-1678</span><span></span><svg width="15" height="18"><use href="#po"/></svg><a>Al Ameen Building Materials<br>Tr...</a><span>30 Jan 2020</span><b>394.80</b><span>Billed</span><em>Sent</em></div>
            <div class="o-row one"><span>PO-1677</span><span></span><svg width="15" height="18"><use href="#po"/></svg><a>Pens Gallery LLC</a><span>30 Jan 2020</span><b>157.50</b><span>Billed</span><em>Sent</em></div>
            <div class="o-row one"><span>PO-1673</span><span></span><svg width="15" height="18"><use href="#po"/></svg><a>Finetools Trading LLC</a><span>30 Jan 2020</span><b>2,066.40</b><span>Billed</span><em>Sent</em></div>
            <div class="o-row"><span>PO-1675</span><span></span><svg width="15" height="18"><use href="#po"/></svg><a>Al Ameen Building Materials<br>Tr...</a><span>29 Jan 2020</span><b>359.10</b><span>Billed</span><em>Sent</em></div>
            <div class="o-row"><span>PO-1674</span><span>pr event</span><svg width="15" height="18"><use href="#po"/></svg><a>Blue Rhine General Trading<br>LLC...</a><span>29 Jan 2020</span><b>67.20</b><span>Approved</span><em>Sent</em></div>
            <div class="o-row"><span>PO-1672</span><span></span><svg width="15" height="18"><use href="#po"/></svg><a>RICHMOND SEATNGS<br>LLC</a><span>29 Jan 2020</span><b>997.50</b><span>Approved</span><em>Sent</em></div>
            <div class="o-row"><span>PO-1671</span><span>990</span><svg width="15" height="18"><use href="#po"/></svg><a>Blue Rhine General Trading<br>LLC...</a><span>29 Jan 2020</span><b>688.81</b><span>Billed</span><em>Sent</em></div>
            <div class="o-row"><span>PO-1680</span><span></span><svg width="15" height="18"><use href="#po"/></svg><a>TAREEQ AL JAFLIAH<br>ALUMINUM &amp;am...</a><span>28 Jan 2020</span><b>73.50</b><span>Billed</span><em>Sent</em></div>
            <div class="o-row"><span>PO-1668</span><span></span><svg width="15" height="18"><use href="#po"/></svg><a>AL SAFIAH PAINTS<br>TRADING LLC</a><span>28 Jan 2020</span><b>950.25</b><span>Approved</span><em>Sent</em></div>
            <div class="o-row"><span>PO-1667</span><span></span><svg width="15" height="18"><use href="#po"/></svg><a>AL SAFIAH PAINTS<br>TRADING LLC</a><span>28 Jan 2020</span><b>2,352.00</b><span>Approved</span><em>Sent</em></div>
            <div class="o-row"></div>
          </div>
        </div>
      </div>
      <div class="scroll"><svg width="8" height="5" viewBox="0 0 8 5"><path d="M0 5l4-4.500L8 5z" fill="#a3a3a3"/></svg><i></i></div>
    </div>
  </div>
  <footer class="taskbar right">
    <span class="start"><svg width="16" height="16"><use href="#win"/></svg></span>
    <span class="t lens"><svg width="17" height="16"><use href="#glass"/></svg></span>
    <span class="t ring"><i></i></span>
    <span class="t"><svg width="23" height="23"><use href="#opera"/></svg></span>
    <span class="t"><svg width="25" height="23"><use href="#outlook"/></svg></span>
    <span class="t"><svg width="21" height="22"><use href="#edge"/></svg></span>
    <span class="t"><svg width="25" height="21"><use href="#mail"/></svg><em class="num">39</em></span>
    <span class="t run"><svg width="22" height="22"><use href="#chrome"/></svg><em>L</em></span>
    <span class="t run act"><svg width="24" height="22"><use href="#word"/></svg></span>
    <span class="t run"><svg width="22" height="20"><use href="#folder"/></svg></span>
    <span class="t run"><svg width="24" height="24"><use href="#clover"/></svg></span>
    <span class="t"><svg width="21" height="23"><use href="#feather"/></svg></span>
    <span class="t"><svg width="18" height="24"><use href="#calc"/></svg></span>
    <span class="t run"><svg width="22" height="22"><use href="#note"/></svg></span>
    <div class="tray"><time>9:50 AM<br>02-Feb-20</time></div>
  </footer>
</section>
</main>
</body>
</html>
```
FILE: styles.css
```css
* { box-sizing: border-box; }
body { margin: 0; overflow: hidden; font-family: "Open Sans", "Noto Sans", sans-serif; }
svg { display: block; flex: none; }
.defs { position: absolute; width: 0; height: 0; }
h1, h2 { margin: 0; }
em, i { font-style: normal; }
.screens { display: grid; grid-template-columns: 1920px 1920px; height: 1080px; }
.screen { display: flex; flex-direction: column; height: 1080px; overflow: hidden; }

/* ---------- word processor ---------- */
.word { display: flex; flex-direction: column; height: 1040px; font-size: 11.2px; color: #262626; white-space: nowrap; }
.titlebar { height: 34px; background: #2b579a; color: #fff; display: grid; grid-template-columns: 660px 1fr 660px; align-items: center; }
.quick { display: grid; grid-template-columns: 29px 18px 17px 32px 10px; align-items: center; padding: 0 0 1px 22px; }
.quick .a { color: #fff; }
.dim { opacity: .3; }
.doctitle { text-align: center; font-size: 11.4px; padding-bottom: 3px; }
.wincontrols { display: grid; grid-template-columns: 84px 48px 46px 45px 12px; align-items: center; padding: 0 0 4px 408px; }
.signin { background: #fff; color: #2b579a; width: 58px; height: 19px; line-height: 18px; text-align: center; border-radius: 1px; }
.rtabs { height: 30px; background: #2b579a; color: #fff; display: grid; grid-template-columns: 61px 72px 56px 63px 63px 84px 72px 64px 52px 52px 81px 26px 1102px 19px 53px; line-height: 28px; font-size: 11.4px; }
.rtabs > :first-child { padding-left: 20px; }
.rtabs .on { background: #f3f3f3; color: #2b579a; width: 58px; padding-left: 12px; }
.rtabs svg { margin-top: 7px; }
.ribbon { display: flex; height: 93px; background: #f3f3f3; border-bottom: 1px solid #c8c8c8; padding-top: 4px; }
.grp { height: 84px; border-right: 1px solid #b6b6b6; display: flex; flex-direction: column; }
.grp footer { margin: auto 0 -5px; height: 19px; display: grid; grid-template-columns: 1fr 12px; align-items: center; text-align: center; }
.a { color: #666; }
.g-clip { width: 165px; }
.grp.g-clip footer { grid-template-columns: 146px 7px 12px; }
.g-clip footer svg { grid-column: 3; }
.clipbody { display: flex; }
.paste { width: 41px; margin-left: 9px; margin-right: 3px; padding-top: 4px; display: flex; flex-direction: column; align-items: center; gap: 1px; line-height: 18px; }
.paste > :first-child { margin-left: 3px; }
.paste .a { margin-top: 4px; }
.cmds { display: grid; grid-template-columns: 19px 1fr; grid-auto-rows: 23px; align-items: center; }
.cmds span { padding-bottom: 1px; }
.off { color: #a8a8a8; }
.g-font { width: 277px; }
.row { display: grid; align-items: center; color: #444; }
.f1 { grid-template-columns: 93px 58px 22px 19px 8px 22px 12px 10px 16px; padding: 1px 0 0 8px; height: 36px; }
.combo { border: 1px solid #ababab; background: #fff; height: 23px; width: 94px; display: flex; align-items: center; justify-content: space-between; padding: 0 3px; color: #262626; font-size: 11.3px; }
.combo + .combo { width: 51px; }
.big, .mid, .aa { display: flex; font-size: 14px; color: #555; }
.mid { font-size: 12px; padding-top: 3px; }
.aa { font-size: 12.5px; }
.up, .dn { width: 0; height: 0; border: 2.5px solid transparent; border-bottom: 3px solid #4a7ebb; margin: 1px 0 0 -1px; }
.dn { border-bottom: 0; border-top: 3px solid #4a7ebb; }
.sep { width: 1px; height: 23px; background: #c9c9c9; }
.f2 { grid-template-columns: 32px 18px 18px 13px 24px 22px 21px 8px 18px 15px 21px 13px 21px 8px; padding-left: 8px; height: 27px; }
.boxed { width: 22px; height: 23px; background: #c8c8c8; display: grid; place-items: center; font-size: 12px; }
.it { font: italic 700 14px "Liberation Serif", serif; }
.un { font-weight: 700; font-size: 12.5px; }
.abc { font-size: 10.5px; }
.sx { font-weight: 700; font-size: 12px; line-height: 12px; }
.sx sub, .sx sup { font-size: 7px; color: #3f76b5; line-height: 0; }
.glow { font-size: 15px; color: #fff; font-weight: 700; -webkit-text-stroke: 1px #3f76b5; text-shadow: 0 0 3px #8ab8ea; }
.hl, .fc { border-bottom: 4px solid #ff0; width: 16px; height: 19px; line-height: 13px; display: flex; font-size: 10.5px; margin-top: 1px; }
.hl svg { margin: 1px 0 0 -4px; }
.fc { border-color: #f00; font-size: 15px; line-height: 15px; font-weight: 600; justify-content: center; }
.grp.g-font footer { grid-template-columns: 261px 15px; }
.g-font footer span { padding-right: 17px; }
.g-para { width: 232px; }
.p1 { grid-template-columns: 21px 12px 22px 12px 25px 9px 7px 22px 24px 9px 22px 11px 12px; padding: 1px 0 0 12px; height: 36px; }
.p2 { grid-template-columns: 26px 22px 22px 22px 9px 18px 15px 8px 21px 14px 20px 8px; padding-left: 8px; height: 27px; }
.pil { font-size: 15px; }
.g-para footer span { padding-right: 4px; }
.g-styles { width: 1119px; padding: 2px 0 0 9px; }
.gallery { display: flex; width: 1099px; height: 60px; flex: none; background: #fff; border: 1px solid #c6c6c6; border-right: 0; }
.st { width: 72px; flex: none; text-align: center; font-family: Lato, sans-serif; color: #000; border: 4px solid transparent; height: 57px; margin-top: 1px; overflow: hidden; }
.st.sel { border-color: #c1c1c1; }
.st em { display: block; width: 58px; margin: 0 0 0 3px; height: 33px; line-height: 33px; overflow: hidden; text-align: left; font-size: 13.4px; letter-spacing: -.1px; }
.st small { display: block; font: 11.2px/16px "Open Sans", sans-serif; color: #595959; margin: 0 -6px; }
.h1 em { font-size: 17px; color: #2f5496; font-weight: 300; }
.h2 em { font-size: 14.8px; color: #2f5496; font-weight: 300; }
.ti em { font-size: 29px; font-weight: 300; line-height: 25px; letter-spacing: -1px; }
.su em { color: #5a5a5a; letter-spacing: .8px; }
.se em { font-style: italic; color: #404040; }
.emph em, .bt em { font-style: italic; }
.ie em, .iq em { font-style: italic; color: #4472c4; }
.bo em, .bt em { font-weight: 700; }
.iq em { height: 20px; line-height: 18px; border: solid #4472c4; border-width: 1px 0; margin: 7px 0 6px 3px; }
.sc em { font-variant: small-caps; color: #5a5a5a; }
.blue em { color: #4472c4; font-weight: 700; }
.gscroll { width: 17px; margin-left: auto; display: grid; grid-template-rows: 20px 19px 19px; color: #444; }
.gscroll span { border: 1px solid #ababab; border-top-width: 0; display: grid; place-items: center; background: #f3f3f3; }
.gscroll .flip { color: #b5b5b5; }
.flip svg { transform: rotate(180deg); }
.gscroll .more { border-top: 2px solid #ababab; }
.grp.g-styles footer { grid-template-columns: 1082px 16px 12px; }
.g-styles footer svg { margin-left: 16px; }
.g-edit { width: 86px; padding-left: 11px; }
.g-edit .cmds { grid-template-columns: 19px 34px 8px; }
.g-edit .cmds .a { margin-left: 1px; }
.abac { font-size: 9px; line-height: 8px; color: #444; }
.abac b { color: #8a4fb0; }
.abac i { color: #3f76b5; }
.grp.g-edit footer { grid-template-columns: 64px; }
.collapse { padding: 79px 0 0 23px; color: #444; }
.collapse svg { transform: rotate(180deg); }
.canvas { flex: 1; background: #e6e6e6; overflow: hidden; }
.page { width: 1470px; height: 862px; margin-left: 216px; background: #fff; border: solid #c6c6c6; border-width: 0 1px; padding-left: 172px; }
.page h1 { font: 700 22.2px/26px Lato, sans-serif; letter-spacing: .4px; color: #000; margin-top: 79px; }
.status { height: 22px; background: #f3f3f3; border-top: 1px solid #c6c6c6; display: grid; grid-template-columns: 76px 60px 32px 1469px 27px 49px 32px 10px 103px 19px 27px; align-items: center; padding-left: 8px; font-size: 11px; color: #444; line-height: 17px; }
.status > span { padding-bottom: 3px; }
.status .on { width: 38px; height: 21px; background: #c6c6c6; display: grid; place-items: center; padding: 0; }
.mn { width: 6px; height: 2px; background: #555; }
.status .slider { width: 99px; height: 11px; padding: 0; display: flex; align-items: center; background: linear-gradient(#999, #999) 0 5px / 100% 1px no-repeat, linear-gradient(#999, #999) 50px 2px / 1px 7px no-repeat; }
.slider i { width: 5px; height: 11px; background: #666; margin-left: 57px; }

/* ---------- bills picture placed in the document ---------- */
.pic { width: 1125px; height: 581px; overflow: hidden; font: 8px "Liberation Sans", Arial, sans-serif; background: #f7f7f7; color: #444; }
.p-url { height: 15px; background: #e6e6e6; border-bottom: 2px solid #b5b5b5; display: grid; grid-template-columns: 19px 19px 13px 1009px 36px 18px 4px; align-items: center; padding: 0 0 4px 6px; color: #555; }
.fw { transform: scaleX(-1); opacity: .45; }
.p-omni { background: #f1f3f4; height: 20px; border-radius: 9px; display: grid; grid-template-columns: 12px 1fr 19px 19px 14px; width: 1000px; margin-left: 4px; align-items: center; padding-left: 8px; }
.p-omni span { font: 7.9px "Open Sans", sans-serif; color: #777; }
.p-omni b { font-weight: 400; color: #333; }
.p-cast { margin-left: 4px; }
.p-av { width: 13px; height: 13px; border-radius: 50%; background: #8d6e63; color: #fff; text-align: center; line-height: 13px; margin-left: -7px; }
.p-dots { width: 2px; height: 9px; background: repeating-linear-gradient(#555 0 2px, transparent 2px 3.5px); }
.p-nav { width: 1123px; height: 39px; background: #0078c8; color: #fff; display: grid; grid-template-columns: 72px 71px 64px 74px 680px 32px 33px 28px 29px 22px; align-items: center; padding-left: 8px; font-size: 9.8px; }
.org { background: #00508b; border-radius: 3px; display: flex; align-items: center; color: #fff; }
.p-nav .org { width: 56px; height: 23px; padding-left: 6px; gap: 3px; font-size: 9px; }
.p-nav .on { align-self: stretch; line-height: 39px; height: 39px; border-bottom: 2px solid #a9d0ec; width: 63px; margin-left: -9px; padding-left: 9px; }
.q { border-radius: 50%; background: #fff; color: #0078c8; font-weight: 700; text-align: center; }
.p-nav .q { width: 10px; height: 10px; font-size: 8px; line-height: 10px; }
.rm { border-radius: 50%; background: #fdbf7c; color: #4a2d10; font-weight: 600; text-align: center; }
.p-nav .rm { width: 21px; height: 21px; line-height: 21px; font-size: 7.5px; }
.p-head { width: 1123px; height: 114px; background: linear-gradient(#fff, #f7f7f7); border-bottom: 1px solid #e3e3e3; padding: 5px 0 0 258px; }
.p-crumb { font-size: 7.5px; line-height: 11px; color: #2b95c2; }
.p-crumb i, .crumb i { color: #888; }
.p-head h2 { font-size: 15px; line-height: 17px; height: 23px; width: 605px; border-bottom: 1px solid #e9e9e9; color: #404040; }
.p-btns { display: flex; align-items: center; margin-top: 8px; height: 18px; color: #1a87b9; font-weight: 700; }
.p-btns > span, .b-tools b { height: 18px; border: 1px solid #d4d8db; border-radius: 2px; background: linear-gradient(#fff, #eceff2); line-height: 16px; margin-right: 10px; width: 76px; text-align: center; white-space: nowrap; }
.p-btns > span:nth-child(3) { width: 41px; }
.p-btns > span:nth-child(4) { width: 42px; margin-right: 15px; }
.p-btns .split { width: 69px; height: 19px; display: grid; grid-template-columns: 48px 20px; }
.split i { border-left: 1px solid #d9dde0; display: grid; place-items: center; }
.p-btns em { width: 9px; height: 9px; border-radius: 50%; background: #1a87b9; color: #fff; font-size: 7px; line-height: 9px; text-align: center; margin-left: 4px; }
.p-btns a { width: 80px; letter-spacing: -.05px; white-space: nowrap; }
.p-tabs { display: grid; grid-template-columns: 33px 53px 106px 114px 40px 65px; width: 411px; margin-top: 20px; height: 28px; line-height: 30px; border: 1px solid #e1e1e1; border-width: 1px 0 0 1px; font-size: 9px; color: #3b9bc5; text-align: center; }
.p-tabs span { border-right: 1px solid #e1e1e1; height: 27px; }
.p-tabs small { font-size: 7.7px; }
.p-tabs .on { background: #fff; color: #333; height: 28px; }
.p-body { width: 1123px; background: linear-gradient(#fff, #f7f7f7 140px); padding: 13px 0 0 40px; }
.bills { width: 1041px; border: 1px solid #e3e5e7; background: #fff; border-radius: 2px; }
.b-tools { height: 26px; background: #fafafa; display: grid; grid-template-columns: 44px 43px; justify-content: end; padding: 2px 7px 0 0; border-top: 1px solid #eee; line-height: 18px; color: #777; }
.b-tools b { width: 43px; color: #1a87b9; }
.b-head, .b-row { display: grid; grid-template-columns: 241px 19px 263px 97px 98px 89px 80px 134px 18px; }
.b-head { height: 19px; background: #fbfbfb; border-top: 1px solid #e9e9e9; color: #1f8dbd; line-height: 18px; }
.b-head b { border-right: 1px solid #e6e6e6; padding: 0 4.5px; height: 18px; }
.b-head b:last-child { border: 0; }
.b-head .r { text-align: right; }
.b-head svg { display: inline; color: #333; }
.b-row { height: 24.23px; border-bottom: 1px solid #e4e4e4; align-items: center; white-space: nowrap; font-size: 7.9px; color: #505050; }
.b-row > * { margin-left: 2.5px; }
.b-row > :nth-child(6) { text-align: right; margin-right: 4px; }
.b-row > :nth-child(7) { text-align: right; margin-right: 5px; }
.b-row a { color: #2290bf; }
.b-row i { display: flex; gap: 2px; align-items: center; color: #2b9fc9; font-size: 6px; }

/* ---------- taskbar ---------- */
.taskbar { height: 40px; display: flex; background: linear-gradient(90deg, #1a1a1a 0, #20301f 24%, #1e331f 35%, #1a2a1b 55%, #202c1e 85%, #35241d 91%, #20201f 97%, #1a1b1a); color: #fff; }
.taskbar.right { background: linear-gradient(90deg, #1c1a1a 0, #1c1b1a 7%, #1e2f20 12%, #203020 45%, #1a2a1a 75%, #23271f); }
.start { width: 48px; display: grid; place-items: center; background: #1c1c1c; }
.right .start { width: 47px; background: none; }
.sbox { width: 344px; background: #f0f0f0; border: 1px solid #b4b4b4; border-left: 0; color: #333; display: flex; align-items: center; padding-left: 12px; gap: 11px; font-size: 14.6px; letter-spacing: -.25px; }
.t { width: 49px; display: grid; place-items: center; position: relative; }
.left .ring { margin-right: 1px; }
.right .ring { margin-right: 2px; }
.ring i { width: 16px; height: 16px; border: 2.5px solid #fff; border-radius: 50%; }
.run::after { content: ""; position: absolute; left: 4px; right: 4px; bottom: 0; height: 2px; background: #76b9ed; }
.act { background: #4e5e4f; }
.act::after { left: 0; right: 0; }
.t em, .ac em { position: absolute; left: 22px; top: 18px; width: 16px; height: 16px; border-radius: 50%; background: #8d6e63; font-size: 9px; line-height: 16px; text-align: center; }
.t .num, .ac .num { left: 27px; top: 17px; width: 20px; height: 20px; line-height: 18px; background: #333; border: 1px solid #999; font-size: 11px; }
.tray { margin-left: auto; display: grid; grid-template-columns: 22px 24px 26px 26px 74px 35px 5px; align-items: center; width: 220px; font-size: 11.3px; letter-spacing: -.2px; }
.tray time { text-align: center; line-height: 18px; white-space: nowrap; }
.tray b { align-self: stretch; border-left: 1px solid #777; }
.right .tray { display: block; width: 72px; padding-top: 2px; }
.right .tray time { display: block; }
.ac { position: relative; margin-left: 7px; height: 16px; }
.ac .num { left: 4px; top: 6px; }

/* ---------- browser ---------- */
.chrome { height: 1040px; display: flex; flex-direction: column; }
.strip { height: 34px; background: #ededed; border-bottom: 1px solid #a0a0a0; display: flex; padding-left: 8px; color: #333; font-size: 11px; }
.tab { height: 33px; width: 240px; background: #cfcfcf; border-radius: 8px 8px 0 8px; display: grid; grid-template-columns: 24px 185px 10px; align-items: center; padding-left: 12px; white-space: nowrap; }
.tab.on { width: 239px; height: 34px; background: #ebebeb; border: 1px solid #a0a0a0; border-bottom: 0; border-radius: 8px 8px 0 0; padding-left: 11px; }
.tab svg:last-child { color: #333; }
.newtab { width: 28px; height: 28px; border-radius: 50%; background: #cfcfcf; display: grid; place-items: center; margin: 3px 0 0 8px; }
.ctl { margin-left: auto; display: grid; grid-template-columns: 46px 45px 29px; align-items: center; color: #888; padding-bottom: 5px; }
.bar { height: 37px; background: #e8e8e8; border-bottom: 1px solid #9c9c9c; display: flex; align-items: center; padding-left: 15px; gap: 17px; color: #5c5e61; }
.omni { width: 1691px; height: 28px; border-radius: 14px; background: #f1f3f4; margin-left: -2px; display: grid; grid-template-columns: 20px 1fr 32px 32px 26px; align-items: center; padding-left: 14px; font-size: 13.2px; color: #77797c; }
.omni b { font-weight: 400; color: #27292c; }
.cast { margin-left: -2px; }
.vsep { width: 1px; height: 20px; background: #c0c0c0; margin-left: -2px; }
.av { width: 22px; height: 22px; border-radius: 50%; background: #8d6e63; color: #fff; font-size: 11px; line-height: 22px; text-align: center; margin-left: -7px; }
.dots { width: 3px; height: 13px; background: repeating-linear-gradient(#5c5e61 0 3px, transparent 3px 5px); margin-left: 2px; }
.view { flex: 1; display: grid; grid-template-columns: 1903px 17px; overflow: hidden; height: 969px; }
.web { font: 13px "Liberation Sans", Arial, sans-serif; color: #333; background: #fafcfb; overflow: hidden; height: 969px; }
.scroll { background: #f1f1f1; padding: 8px 2px 0; }
.scroll svg { margin: 0 0 4px 3px; }
.scroll i { display: block; height: 480px; background: #c1c1c1; }
.nav { height: 66px; background: #0078c8; color: #fff; display: grid; grid-template-columns: 123px 120px 108px 126px 1149px 55px 55px 55px 44px 37px; align-items: center; padding-left: 17px; font-size: 16.4px; }
.nav .org { width: 95px; height: 38px; padding-left: 10px; gap: 6px; font-size: 16.5px; letter-spacing: -.2px; }
.nav .on { height: 66px; line-height: 66px; border-bottom: 3px solid #b3d6ee; width: 107px; margin-left: -16px; padding-left: 16px; }
.nav .q { width: 16px; height: 16px; font-size: 13px; line-height: 16px; }
.nav .rm { width: 36px; height: 36px; line-height: 36px; font-size: 12.5px; }
.head { height: 70px; background: linear-gradient(#fff, #f2f2f2); padding: 10px 0 0 435px; }
.crumb { color: #048abb; line-height: 16px; }
.crumb i { margin-left: 6px; }
.head h2 { font-size: 26px; line-height: 34px; letter-spacing: .1px; }
.actions { height: 116px; border-bottom: 1px solid #dadee1; padding: 22px 0 0 436px; }
.btn { display: block; width: 169px; height: 31px; line-height: 29px; border: 1px solid #c3c8cc; border-radius: 3px; background: linear-gradient(#fff, #e7eaee); color: #048abb; font-weight: 700; text-align: center; }
.tabs { margin-top: 16px; width: 594px; height: 46px; display: grid; grid-template-columns: 57px 93px 184px 135px 124px; border: 1px solid #d6dade; border-right: 0; border-bottom: 0; font-size: 15px; line-height: 45px; text-align: center; color: #048abb; }
.tabs span { border-right: 1px solid #d6dade; height: 45px; }
.tabs .on { background: #fff; color: #333; height: 47px; }
.content { height: 717px; background: linear-gradient(#fff, #fafcfb 200px); padding: 22px 0 0 436px; }
.orders { width: 1031px; border: 1px solid #dcdfe1; background: #fff; border-radius: 3px; }
.o-tools { height: 41px; display: grid; grid-template-columns: 76px 72px; justify-content: end; padding: 5px 11px 0 0; color: #999; line-height: 31px; font-size: 14px; }
.o-tools .btn { width: 72px; font-size: 13px; }
.o-head, .o-row { display: grid; white-space: nowrap; }
.o-head { height: 35px; grid-template-columns: 110px 195px 174px 110px 106px 131px 110px 55px 38px; border-bottom: 1px solid #e0e2e4; background: linear-gradient(#fff, #f5f7f9); color: #048abb; line-height: 32px; }
.o-head b { border-right: 1px solid #e0e3e6; padding-left: 9px; }
.o-head b:last-child { border: 0; }
.o-head .r { text-align: right; padding-right: 17px; }
.o-head b:nth-child(3) { padding-left: 10px; }
.o-head svg { display: inline; color: #333; }
.o-row { height: 58px; grid-template-columns: 110px 173px 23px 174px 200px 121px 24px 110px 60px; border-bottom: 1px solid #e3e5e6; align-items: center; padding-left: 9px; line-height: 15px; }
.o-row > span:nth-child(5) { margin-left: -1px; }
.o-row > svg + a { letter-spacing: .05px; }
.o-row.first { height: 57px; }
.o-row.one { height: 47px; }
.o-row b { text-align: right; font-size: 12.8px; }
.o-row b + span { grid-column: 8; margin-left: -1px; }
.o-row a { color: #048abb; }
.o-row em { color: #35a30b; margin-left: -1px; }
```
